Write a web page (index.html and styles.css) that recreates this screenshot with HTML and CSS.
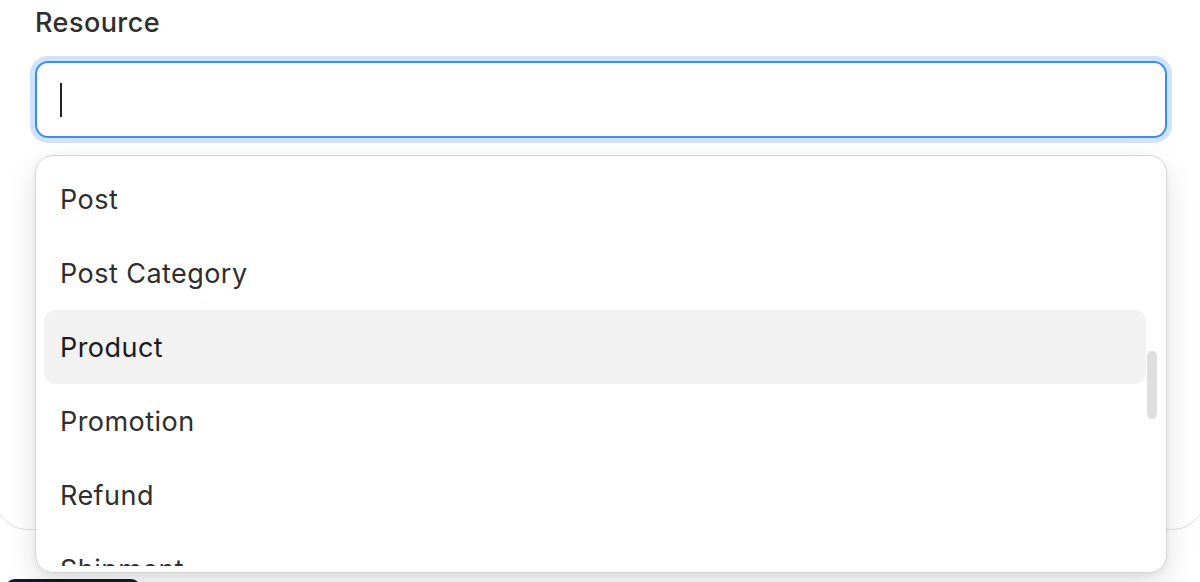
FILE: index.html
```html
<!DOCTYPE html>
<html>
<head>
<meta charset="utf-8">
<link rel="stylesheet" href="styles.css">
</head>
<body>
<div class="page">
  <div class="card">
    <div class="field">
      <label class="label">Resource</label>
      <div class="input"><span class="caret"></span></div>
      <div class="dropdown">
        <div class="viewport">
          <ul class="list">
            <li class="item">Post</li>
            <li class="item">Post Category</li>
            <li class="item active">Product</li>
            <li class="item">Promotion</li>
            <li class="item">Refund</li>
            <li class="item">Shipment</li>
            <li class="item">Supplier</li>
          </ul>
        </div>
        <div class="thumb"></div>
      </div>
    </div>
  </div>
  <div class="button"></div>
</div>
</body>
</html>
```

FILE: styles.css
```css
html, body {
  margin: 0;
  padding: 0;
  background: #ffffff;
  overflow: hidden;
}
body {
  font-family: Inter, "Noto Sans", sans-serif;
  width: 1200px;
  height: 582px;
}
.page {
  position: relative;
  width: 1200px;
  height: 582px;
  overflow: hidden;
}
.card {
  margin: -40px -6px 0 -6px;
  height: 570px;
  border: 1px solid #e3e3e3;
  border-top: none;
  border-radius: 0 0 34px 34px;
  box-sizing: border-box;
  padding: 40px 0 0 40px;
}
.field {
  position: relative;
  width: 1132px;
}
.label {
  display: block;
  font-size: 27px;
  font-weight: 500;
  color: #2e2e2e;
  line-height: 46px;
  letter-spacing: 0.45px;
}
.input {
  margin-top: 15px;
  height: 77px;
  box-sizing: border-box;
  border: 2px solid #3b8cf5;
  border-radius: 13px;
  box-shadow: 0 0 0 5px #cfe3fd;
  display: flex;
  align-items: center;
  padding-left: 23px;
}
.caret {
  width: 2px;
  height: 34px;
  background: #222;
}
.dropdown {
  position: absolute;
  left: 0;
  right: 0;
  top: 155px;
  height: 418px;
  box-sizing: border-box;
  background: #fff;
  border: 1px solid #d6d6d6;
  border-radius: 18px;
  box-shadow: 0 12px 30px rgba(0, 0, 0, 0.12), 0 2px 6px rgba(0, 0, 0, 0.05);
  overflow: hidden;
  z-index: 2;
}
.viewport {
  margin: 6px 0;
  height: 404px;
  overflow: hidden;
}
.list {
  list-style: none;
  margin: 0;
  padding: 0 20px 0 8px;
}
.item {
  height: 74px;
  display: flex;
  align-items: center;
  padding-left: 16px;
  font-size: 27px;
  color: #2e2e2e;
  border-radius: 12px;
  letter-spacing: 0.45px;
}
.item.active {
  background: #f2f2f2;
  color: #1a1a1a;
}
.thumb {
  position: absolute;
  right: 9px;
  top: 195px;
  width: 10px;
  height: 68px;
  border-radius: 5px;
  background: #dedede;
}
.button {
  position: absolute;
  left: 5px;
  top: 579px;
  width: 136px;
  height: 40px;
  border-radius: 10px;
  background: #0f1a2e;
}
```
